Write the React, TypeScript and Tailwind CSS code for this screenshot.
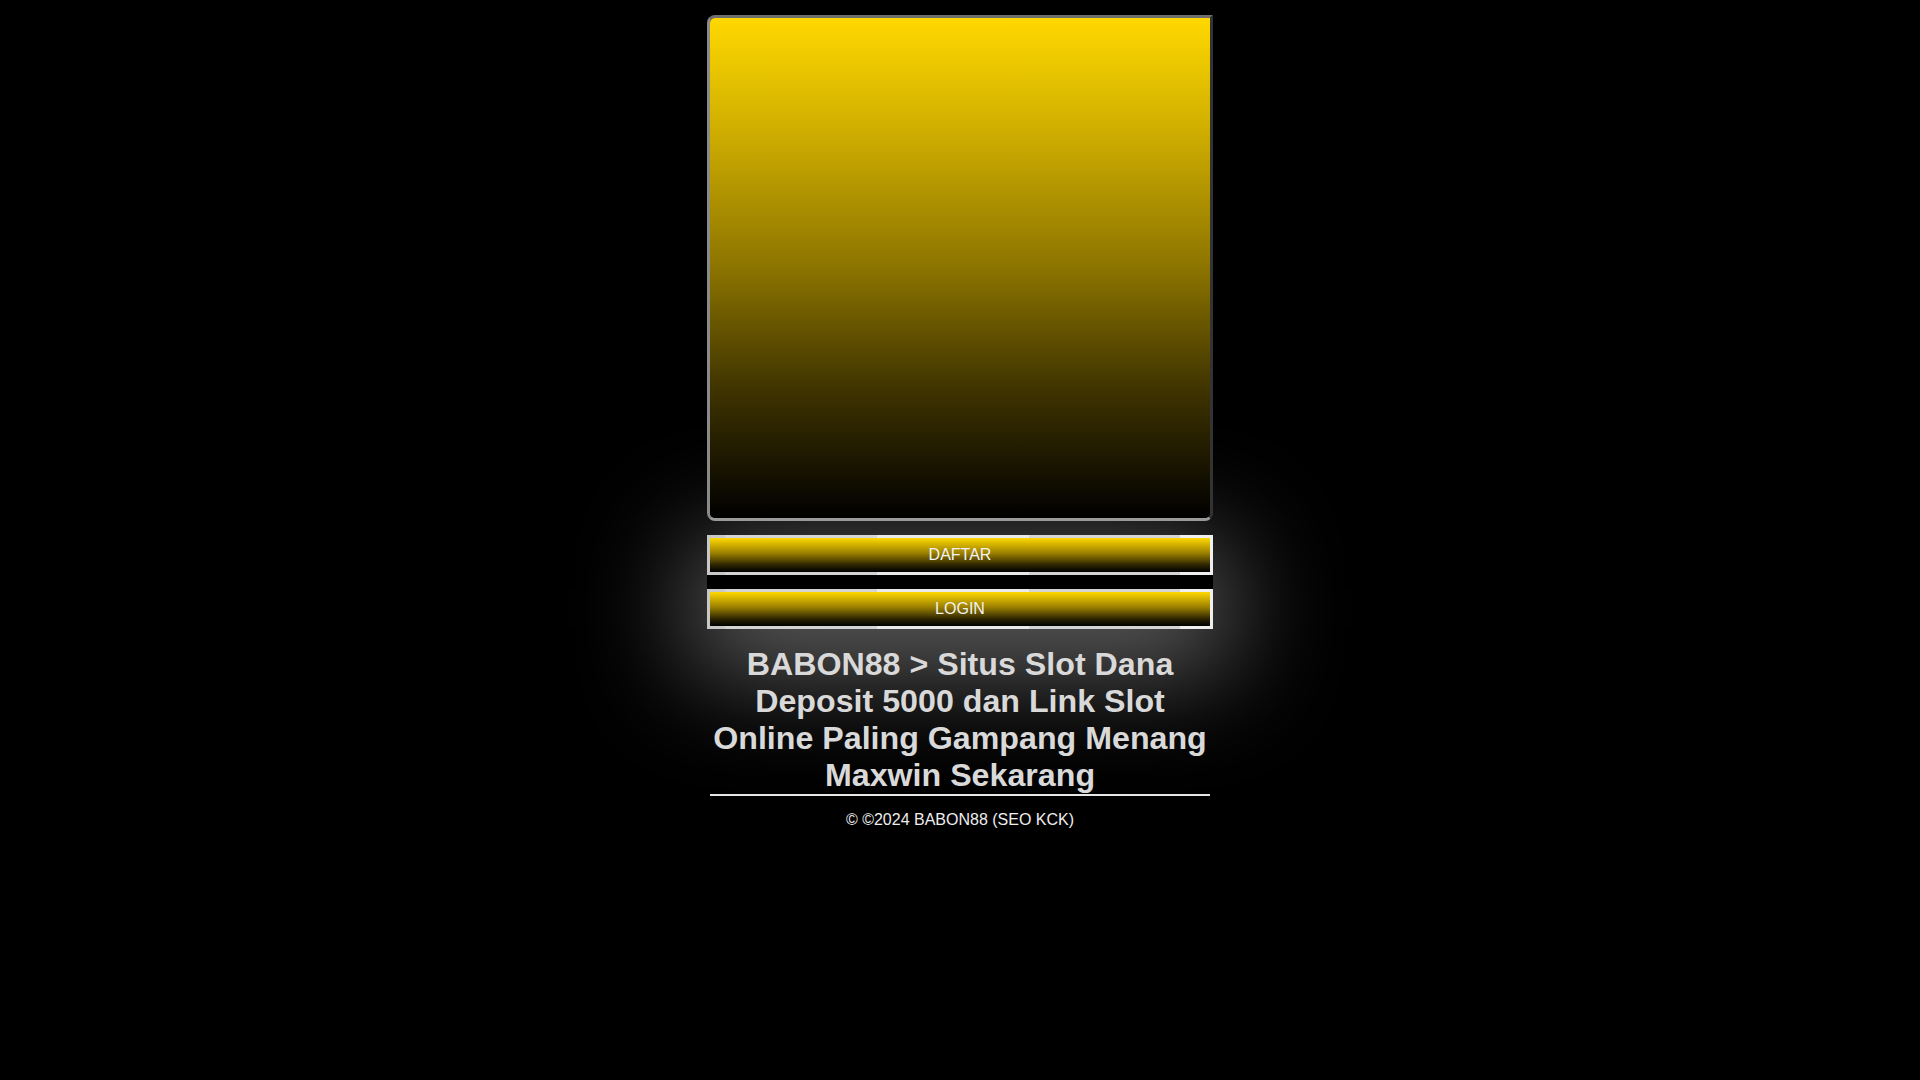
import React from "react";

export default function App() {
  return (
    <div className="min-h-screen w-full bg-black font-['Liberation_Sans',Arial,sans-serif] text-[#eee]">
      <div className="mx-auto flex w-[506px] flex-col pt-[15px]">
        <div className="relative z-10 h-[506px] w-[506px] rounded-[8px] rounded-tr-none border-[3px] border-t-[#6e6e6e] border-l-[#8a8a8a] border-b-[#9a9a9a] border-r-[#333] bg-black">
          <div className="h-full w-full rounded-[5px] rounded-tr-none bg-[linear-gradient(to_bottom,#ffd800_0%,#c9a900_25%,#8c7400_50%,#3d3200_75%,#000_100%)]" />
        </div>

        <div className="mt-[14px] flex flex-col gap-[14px] shadow-[0_25px_110px_18px_rgba(255,255,255,0.38)]">
          {["DAFTAR", "LOGIN"].map((t) => (
            <a
              key={t}
              href="#"
              className="block h-[40px] bg-[linear-gradient(to_right,#c8c8c8_0px,#c8c8c8_18px,#d4d4d4_18px,#d4d4d4_170px,#e9e9e9_170px,#e9e9e9_322px,#d4d4d4_322px,#d4d4d4_473px,#efefef_473px)] p-[3px]"
            >
              <span className="flex h-[34px] w-full items-center justify-center bg-[linear-gradient(to_bottom,#ffd800_0%,#9a7f00_45%,#2a2200_80%,#000_100%)] text-[16px] text-[#f2f2f2]">
                {t}
              </span>
            </a>
          ))}
        </div>

        <div className="relative z-10 mx-[3px] mt-[17px]">
          <h1 className="border-b-2 border-[#e6e6e6] text-center text-[32.2px] font-bold leading-[37px] text-[#d9d9d9]">
            BABON88 &gt; Situs Slot Dana Deposit 5000 dan Link Slot Online Paling Gampang Menang Maxwin Sekarang
          </h1>
          <p className="mt-[15px] text-center text-[16px] leading-[18px] text-[#eee]">
            © ©2024 BABON88 (SEO KCK)
          </p>
        </div>
      </div>
    </div>
  );
}
